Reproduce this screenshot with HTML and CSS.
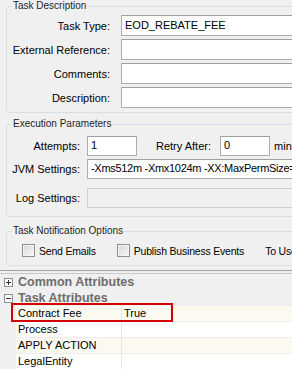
FILE: index.html
```html
<!DOCTYPE html>
<html lang="en">
<head>
  <meta charset="UTF-8" />
  <title>Task Editor</title>
  <link rel="stylesheet" href="styles.css">
</head>
<body>
  <div class="form">
    <fieldset class="group desc">
      <legend>Task Description</legend>
      <div class="grid">
        <label>Task Type:</label><div class="field">EOD_REBATE_FEE</div>
        <label>External Reference:</label><div class="field"></div>
        <label>Comments:</label><div class="field"></div>
        <label>Description:</label><div class="field"></div>
      </div>
    </fieldset>

    <fieldset class="group exec">
      <legend>Execution Parameters</legend>
      <div class="grid">
        <label>Attempts:</label>
        <div class="line">
          <div class="field small">1</div>
          <span class="retry">Retry After:</span>
          <div class="field small">0</div>
          <span class="unit">min</span>
        </div>
        <label>JVM Settings:</label><div class="field jvm">-Xms512m -Xmx1024m -XX:MaxPermSize=</div>
        <label class="log">Log Settings:</label><div class="field disabled log"></div>
      </div>
    </fieldset>

    <fieldset class="group notify">
      <legend>Task Notification Options</legend>
      <div class="checks">
        <span class="check"><i class="box"></i>Send Emails</span>
        <span class="check"><i class="box"></i>Publish Business Events</span>
        <span class="check">To Users</span>
      </div>
    </fieldset>
  </div>

  <div class="splitter"></div>

  <div class="props">
    <div class="category">
      <svg class="toggle" width="9" height="9" viewBox="0 0 9 9"><rect x="0.5" y="0.5" width="8" height="8" fill="#fff" stroke="#919191"/><path d="M2 4.5h5M4.5 2v5" stroke="#333"/></svg>
      Common Attributes
    </div>
    <div class="category">
      <svg class="toggle" width="9" height="9" viewBox="0 0 9 9"><rect x="0.5" y="0.5" width="8" height="8" fill="#fff" stroke="#919191"/><path d="M2 4.5h5" stroke="#333"/></svg>
      Task Attributes
    </div>
    <div class="row alt selected"><span class="name">Contract Fee</span><span class="value">True</span><div class="highlight"></div></div>
    <div class="row"><span class="name">Process</span><span class="value"></span></div>
    <div class="row alt"><span class="name">APPLY ACTION</span><span class="value"></span></div>
    <div class="row"><span class="name">LegalEntity</span><span class="value"></span></div>
  </div>
</body>
</html>
```

FILE: styles.css
```css
* {
  box-sizing: border-box;
}
html, body {
  margin: 0;
  padding: 0;
  overflow: hidden;
}
body {
  width: 292px;
  height: 369px;
  background: #f0f0f0;
  font-family: 'Liberation Sans', Arial, sans-serif;
  font-size: 11px;
  color: #000;
}
.form {
  width: 340px;
  padding-left: 6px;
}
.group {
  margin: 0;
  border: 1px solid #d5dfe5;
  border-radius: 3px;
  padding: 0 0 8px 0;
  min-width: 0;
}
.group legend {
  font-size: 10px;
  line-height: 10px;
  padding: 0 1px;
  margin-left: 5px;
  color: #1e1e1e;
}
.desc {
  margin-top: 1px;
  padding: 4px 0 4px 0;
}
.exec {
  margin-top: 6px;
  padding: 7px 0 8px 0;
}
.notify {
  margin-top: 9px;
  padding: 8px 0 8px 0;
}
.grid {
  display: grid;
  align-items: center;
}
.desc .grid {
  grid-template-columns: 103px 1fr;
  column-gap: 11px;
  row-gap: 3px;
}
.exec .grid {
  grid-template-columns: 73px 1fr;
  column-gap: 7px;
  row-gap: 3px;
}
label {
  text-align: right;
  white-space: nowrap;
}
.field {
  height: 21px;
  background: #fff;
  border: 1px solid #abadb3;
  border-top-color: #a0a0a0;
  padding: 3px 3px;
  line-height: 13px;
  white-space: nowrap;
  overflow: hidden;
}
.exec .field {
  height: 20px;
  padding-top: 2px;
}
.field.jvm {
  letter-spacing: -0.3px;
}
.field.small {
  width: 50px;
}
.field.disabled {
  background: #f0f0f0;
  border-color: #cfcfcf;
}
.exec .log {
  margin-top: 6px;
}
.line {
  display: flex;
  align-items: center;
}
.retry {
  margin-left: 19px;
  margin-right: 9px;
}
.unit {
  margin-left: 4px;
}
.checks {
  display: flex;
  align-items: center;
  padding-left: 15px;
  height: 13px;
  font-size: 10.5px;
  letter-spacing: -0.2px;
}
.check {
  display: flex;
  align-items: center;
  margin-right: 21px;
  white-space: nowrap;
}
.box {
  display: inline-block;
  width: 13px;
  height: 13px;
  border: 1px solid #8e8f8f;
  background: linear-gradient(135deg, #d8d8d8 0%, #f6f6f6 100%);
  box-shadow: inset 0 0 0 1px #f4f4f4;
  margin-right: 4px;
}
.splitter {
  margin-top: 4px;
  height: 4px;
  border-top: 1px solid #a0a0a0;
  border-bottom: 1px solid #c8c8c8;
}
.props {
  width: 340px;
}
.category {
  height: 16px;
  display: flex;
  align-items: center;
  padding-left: 4px;
  font-size: 12.5px;
  font-weight: bold;
  color: #6d6d6d;
}
.toggle {
  margin-right: 5px;
  flex: none;
}
.row {
  position: relative;
  display: flex;
  height: 16px;
  margin-left: 16px;
  background: #fff;
  border-bottom: 1px solid #ececec;
  line-height: 15px;
}
.row.alt {
  background: #fbf9f0;
}
.name {
  width: 106px;
  padding-left: 2px;
  border-right: 1px solid #e6e6e6;
}
.value {
  padding-left: 2px;
}
.highlight {
  position: absolute;
  left: -5px;
  top: -3px;
  width: 162px;
  height: 19px;
  border: 2px solid #d40000;
}
```
